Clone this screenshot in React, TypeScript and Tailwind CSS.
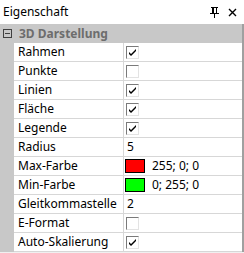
type Row =
  | { name: string; kind: "check"; checked: boolean }
  | { name: string; kind: "text"; value: string }
  | { name: string; kind: "color"; color: string; value: string };

const rows: Row[] = [
  { name: "Rahmen", kind: "check", checked: true },
  { name: "Punkte", kind: "check", checked: false },
  { name: "Linien", kind: "check", checked: true },
  { name: "Fläche", kind: "check", checked: true },
  { name: "Legende", kind: "check", checked: true },
  { name: "Radius", kind: "text", value: "5" },
  { name: "Max-Farbe", kind: "color", color: "bg-[#ff0000]", value: "255; 0; 0" },
  { name: "Min-Farbe", kind: "color", color: "bg-[#00ff00]", value: "0; 255; 0" },
  { name: "Gleitkommastelle", kind: "text", value: "2" },
  { name: "E-Format", kind: "check", checked: false },
  { name: "Auto-Skalierung", kind: "check", checked: true },
];

function CheckBox({ checked }: { checked: boolean }) {
  return (
    <div className="w-[13px] h-[13px] border border-[#7a7a7a] border-r-[#e3e3e3] border-b-[#e3e3e3] bg-white flex items-center justify-center">
      {checked && (
        <svg width="9" height="9" viewBox="0 0 9 9">
          <path d="M1 4 L3 6 L8 1 L8 3 L3 8 L1 6 Z" fill="#000" />
        </svg>
      )}
    </div>
  );
}

// classic docked-window pin glyph
function PinGlyph() {
  return (
    <svg width="9" height="11" viewBox="0 0 9 11" shapeRendering="crispEdges">
      <rect x="1" y="0" width="7" height="1" fill="#000" />
      <rect x="2" y="0" width="2" height="6" fill="#000" />
      <rect x="6" y="0" width="1" height="6" fill="#000" />
      <rect x="0" y="6" width="9" height="1" fill="#000" />
      <rect x="4" y="7" width="1" height="4" fill="#000" />
    </svg>
  );
}

function CloseGlyph() {
  return (
    <svg width="9" height="9" viewBox="0 0 9 9">
      <path d="M1 1 L8 8 M8 1 L1 8" stroke="#000" strokeWidth="1.4" />
    </svg>
  );
}

export default function App() {
  return (
    <div
      className="w-[244px] h-[253px] bg-[#f0f0f0] text-[12px] text-black overflow-hidden"
      style={{ fontFamily: "'Noto Sans', 'Open Sans', sans-serif" }}
    >
      {/* ─── Title bar ─── */}
      <div className="h-[24px] bg-white flex items-center justify-between pl-[3px] pr-[7px]">
        <span>Eigenschaft</span>
        <div className="flex items-center gap-[9px]">
          <PinGlyph />
          <CloseGlyph />
        </div>
      </div>

      {/* ─── Grid ─── */}
      <div className="border-r-2 border-[#a0a0a0] w-[244px]">
        <div className="h-[19px] bg-[#c8c8c8] flex items-center">
          <div className="w-[14px] flex justify-center">
            <div className="w-[9px] h-[9px] border border-[#404040] flex items-center justify-center">
              <div className="w-[5px] h-px bg-[#404040]" />
            </div>
          </div>
          <span className="pl-[5px] font-bold text-[#6d6d6d]">3D Darstellung</span>
        </div>
        <div className="flex">
          <div className="w-[14px] bg-[#c8c8c8]" />
          <div className="flex-1 bg-white">
            {rows.map((r) => (
              <div key={r.name} className="h-[19px] flex border-b border-[#d7d7d7]">
                <div className="w-[110px] border-r border-[#d7d7d7] pl-[4px] flex items-center">
                  {r.name}
                </div>
                <div className="flex-1 flex items-center">
                  {r.kind === "check" && (
                    <div className="pl-[2px]">
                      <CheckBox checked={r.checked} />
                    </div>
                  )}
                  {r.kind === "text" && <span className="pl-[3px]">{r.value}</span>}
                  {r.kind === "color" && (
                    <>
                      <div className={`ml-[1px] w-[20px] h-[14px] border border-black ${r.color}`} />
                      <span className="pl-[7px]">{r.value}</span>
                    </>
                  )}
                </div>
              </div>
            ))}
          </div>
        </div>
      </div>
    </div>
  );
}
